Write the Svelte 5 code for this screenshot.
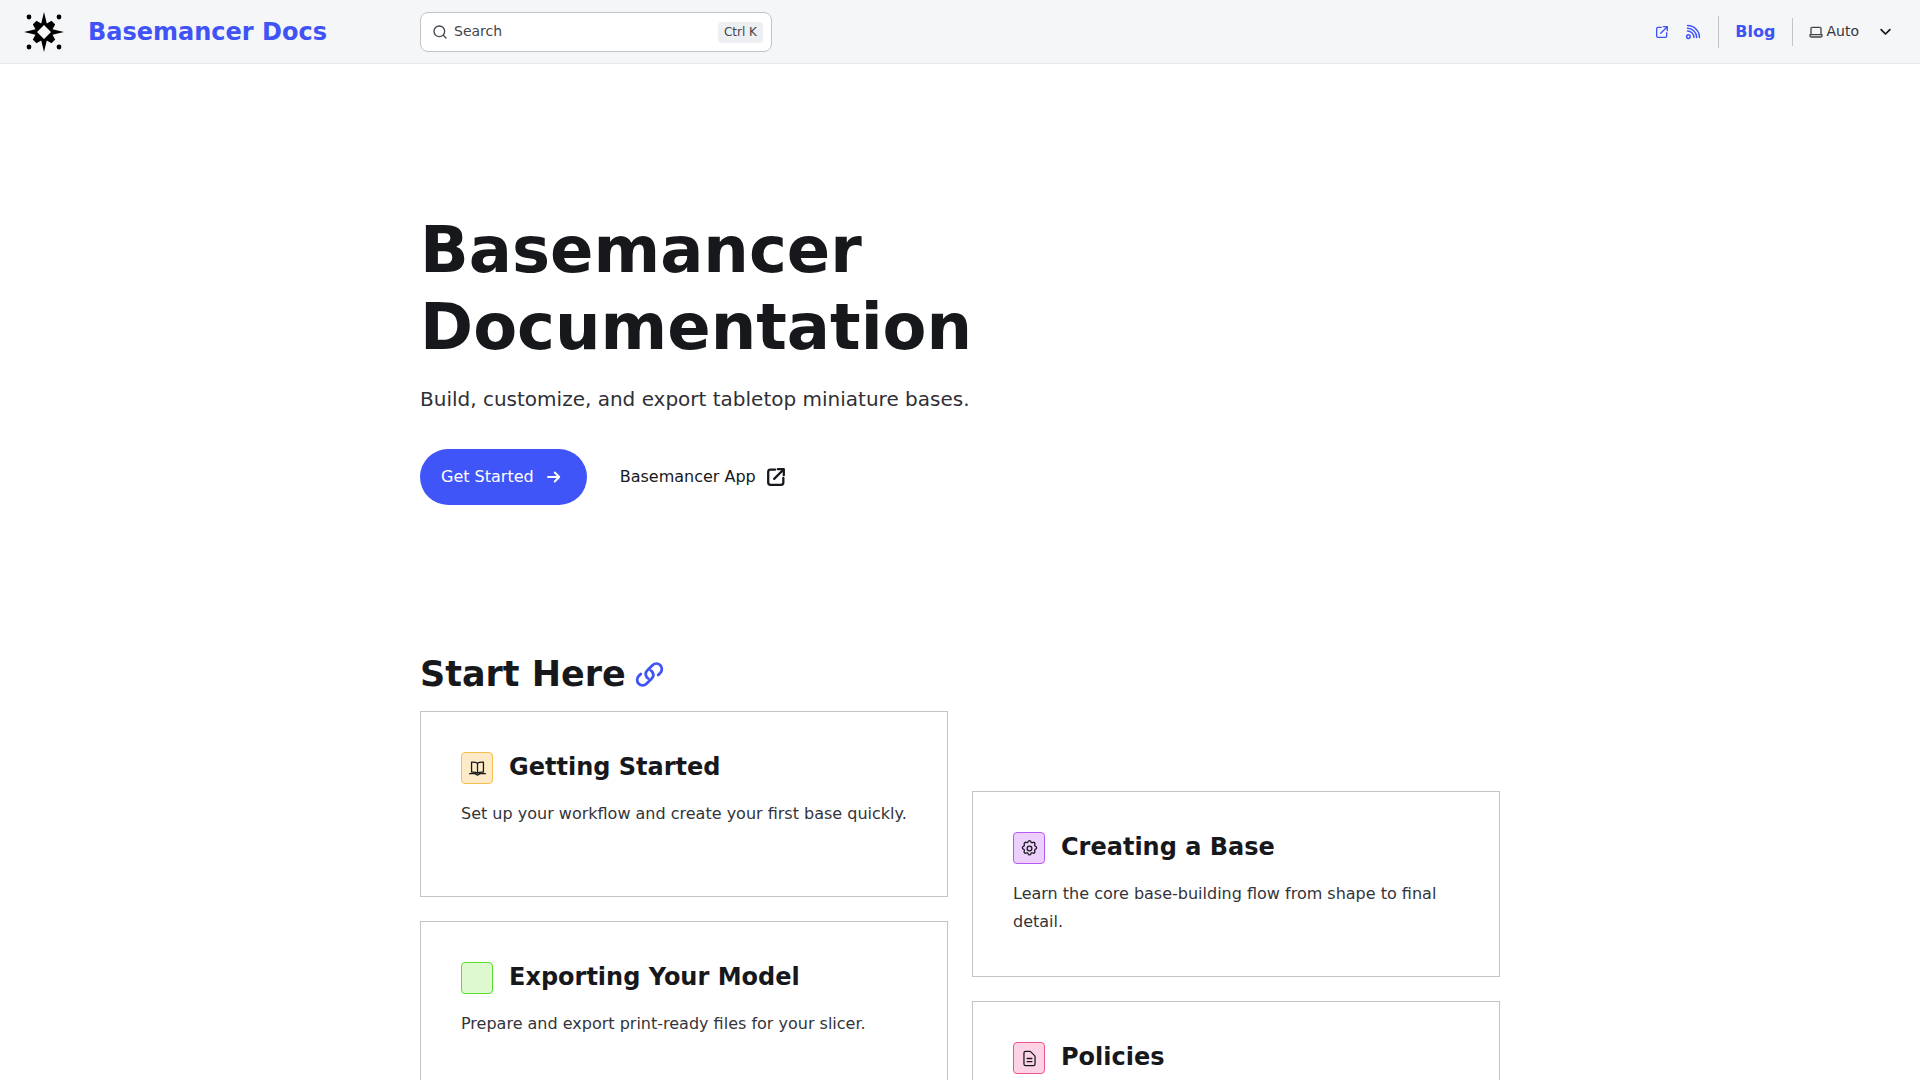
<script>
  const left = [
    { title: 'Getting Started', desc: 'Set up your workflow and create your first base quickly.', tone: 'amber', icon: 'book' },
    { title: 'Exporting Your Model', desc: 'Prepare and export print-ready files for your slicer.', tone: 'green', icon: '' }
  ];
  const right = [
    { title: 'Creating a Base', desc: 'Learn the core base-building flow from shape to final detail.', tone: 'purple', icon: 'gear' },
    { title: 'Policies', desc: '', tone: 'pink', icon: 'doc' }
  ];
</script>

{#snippet icon(name)}
  {#if name === 'book'}
    <svg viewBox="0 0 24 24" class="ci"><path d="M12 5.500C10.500 4.300 8 3.800 4.500 4v12.500c3.500-.2 6 .3 7.500 1.500 1.500-1.200 4-1.700 7.500-1.500V4C16 3.800 13.500 4.300 12 5.500zM12 5.500V18M2 18.500h7l3 2 3-2h7" /></svg>
  {:else if name === 'gear'}
    <svg viewBox="0 0 24 24" class="ci"><path d="M10.300 3.300c.4-1.800 3-1.800 3.400 0a1.700 1.700 0 0 0 2.600 1.100c1.500-.9 3.300.8 2.400 2.400a1.700 1.700 0 0 0 1 2.500c1.800.5 1.800 3 0 3.400a1.700 1.700 0 0 0-1 2.600c.9 1.500-.9 3.300-2.400 2.400a1.700 1.700 0 0 0-2.600 1c-.4 1.800-3 1.800-3.400 0a1.700 1.700 0 0 0-2.600-1c-1.500.9-3.300-.9-2.400-2.400a1.700 1.700 0 0 0-1-2.600c-1.800-.4-1.800-2.900 0-3.400a1.700 1.700 0 0 0 1-2.500C4.800 5.200 6.600 3.500 8.100 4.400a1.700 1.700 0 0 0 2.200-1.100z" /><circle cx="12" cy="12" r="3" /></svg>
  {:else if name === 'doc'}
    <svg viewBox="0 0 24 24" class="ci"><path d="M9 12h6M9 16h6M17 21H7a2 2 0 0 1-2-2V5a2 2 0 0 1 2-2h5.600a1 1 0 0 1 .7.3l5.400 5.400a1 1 0 0 1 .3.700V19a2 2 0 0 1-2 2z" /></svg>
  {/if}
{/snippet}

{#snippet card(c)}
  <a class="card" href="#top">
    <h3><span class="badge {c.tone}">{@render icon(c.icon)}</span><span class="ctitle">{c.title}</span></h3>
    {#if c.desc}<p>{c.desc}</p>{/if}
  </a>
{/snippet}

<header class="nav">
  <a class="brand" href="#top">
    <svg class="logo" viewBox="0 0 40 40">
      <path fill-rule="evenodd" d="M20 0 L22.800 11.500 L27.500 8.800 L31.200 12.500 L28.500 17.200 L40 20 L28.500 22.800 L31.200 27.500 L27.500 31.200 L22.800 28.500 L20 40 L17.200 28.500 L12.500 31.200 L8.800 27.500 L11.500 22.800 L0 20 L11.500 17.200 L8.800 12.500 L12.500 8.800 L17.200 11.500 Z M20 13 L13 20 L20 27 L27 20 Z" />
      <circle cx="5" cy="5" r="2.400" /><circle cx="35" cy="5" r="2.400" /><circle cx="5" cy="35" r="2.400" /><circle cx="35" cy="35" r="2.400" />
    </svg>
    <span>Basemancer Docs</span>
  </a>
  <div class="search">
    <svg viewBox="0 0 24 24" class="sicon"><circle cx="11" cy="11" r="8" /><path d="m21 21-4.300-4.300" /></svg>
    <span class="ph">Search</span>
    <kbd>Ctrl K</kbd>
  </div>
  <nav class="right">
    <svg viewBox="0 0 24 24" class="ni ext"><path d="M11 5H6a2 2 0 0 0-2 2v11a2 2 0 0 0 2 2h11a2 2 0 0 0 2-2v-5M10 14 20 4M14 4h6v6" /></svg>
    <svg viewBox="0 0 24 24" class="ni rss"><path d="M6 5c7.200 0 13 5.800 13 13M6 11a7 7 0 0 1 7 7" /><path d="M6 8c5.500 0 10 4.500 10 10" /><circle cx="7" cy="17" r="2" /></svg>
    <span class="sep tall"></span>
    <a class="blog" href="#top">Blog</a>
    <span class="sep short"></span>
    <svg viewBox="0 0 24 24" class="laptop"><path d="M6 5h12a1.500 1.500 0 0 1 1.500 1.500V16h-15V6.500A1.500 1.500 0 0 1 6 5zM3 16h18v1.500a2 2 0 0 1-2 2H5a2 2 0 0 1-2-2z" /></svg>
    <span class="auto">Auto</span>
    <svg viewBox="0 0 24 24" class="chev"><path d="m5 9 7 7 7-7" /></svg>
  </nav>
</header>

<main class="page">
  <h1>Basemancer<br />Documentation</h1>
  <p class="sub">Build, customize, and export tabletop miniature bases.</p>
  <div class="actions">
    <a class="primary" href="#top"><span class="lbl">Get Started</span>
      <svg viewBox="0 0 24 24" class="arrow"><path d="M4 12h15M13 6l6 6-6 6" /></svg>
    </a>
    <a class="secondary" href="#top"><span class="lbl">Basemancer App</span>
      <svg viewBox="0 0 24 24" class="extbig"><path d="M11 4H6a2.500 2.500 0 0 0-2.500 2.500V18A2.500 2.500 0 0 0 6 20.500h11.500A2.500 2.500 0 0 0 20 18v-5M10 14 20.500 3.500M14 3.500h6.500V10" /></svg>
    </a>
  </div>
  <h2>Start Here
    <svg viewBox="0 0 24 24" class="link"><path d="M13.200 8.800a4.500 4.500 0 0 1 1.200 1.200 4.500 4.500 0 0 1-.9 5.700l-4 4a4.500 4.500 0 0 1-6.400-6.400l1.700-1.700M10.800 15.200a4.500 4.500 0 0 1-1.200-1.200 4.500 4.500 0 0 1 .9-5.700l4-4a4.500 4.500 0 0 1 6.400 6.400l-1.700 1.700" /></svg>
  </h2>
  <div class="grid">
    <div class="col">
      {#each left as c}{@render card(c)}{/each}
    </div>
    <div class="col offset">
      {#each right as c}{@render card(c)}{/each}
    </div>
  </div>
</main>

<style>
  :global(html), :global(body) { overflow: hidden; height: 100%; }
  :global(body) { background: #fff; color: #17181c; font-family: "DejaVu Sans", sans-serif; }
  svg { display: block; flex: none; fill: none; stroke: currentColor; stroke-linecap: round; stroke-linejoin: round; }
  a { text-decoration: none; color: inherit; }

  .nav { height: 63px; display: flex; align-items: center; background: #f5f6f8; border-bottom: 1px solid #e8e9ec; padding: 0 24px; }
  .brand { width: 396px; display: flex; align-items: center; gap: 24px; color: #4053f5; font-weight: 700; font-size: 24px; flex: none; }
  .logo { width: 40px; height: 40px; fill: #000; stroke: none; }

  .search { width: 352px; height: 40px; margin-top: 1px; box-sizing: border-box; background: #fff; border: 1px solid #c3c4c8; border-radius: 8px; display: flex; align-items: center; padding: 0 8px 0 11px; gap: 6px; color: #44454b; font-size: 14px; flex: none; }
  .sicon { width: 16px; height: 16px; stroke-width: 2; }
  .ph { flex: 1; margin-top: -2px; }
  kbd { font-family: inherit; font-size: 12px; background: #eeeff2; border-radius: 4px; padding: 3px 6px; line-height: 15px; color: #44454b; }

  .right { margin-left: auto; display: flex; align-items: center; color: #4053f5; }
  .ni { stroke-width: 2; }
  .ext { width: 16px; height: 16px; }
  .rss { width: 22px; height: 22px; margin-left: 12px; stroke-width: 1.600; }
  .sep { width: 1px; background: #c3c4c8; }
  .tall { height: 32px; margin: 0 16px 0 14px; }
  .short { height: 28px; margin: 0 15px 0 17px; }
  .blog { font-weight: 700; font-size: 16px; }
  .laptop { width: 16px; height: 16px; color: #44454b; stroke-width: 2; }
  .auto { color: #34353a; font-size: 14px; margin: -2px 0 0 2px; }
  .chev { width: 15px; height: 15px; color: #17181c; stroke-width: 2.800; margin: 0 3px 0 19px; }

  .page { width: 1080px; margin: 0 auto; padding-top: 148px; }
  h1 { margin: 0; font-size: 64px; line-height: 77px; font-weight: 700; color: #17181c; }
  .sub { margin: 19px 0 0; font-size: 20px; line-height: 28px; color: #2f3036; }
  .actions { display: flex; align-items: center; margin-top: 36px; gap: 33px; }
  .primary { display: flex; align-items: center; gap: 11px; height: 56px; padding: 0 24px 0 21px; border-radius: 28px; background: #4055f8; color: #fff; font-size: 16px; }
  .lbl { margin-top: -2px; }
  .arrow { width: 18px; height: 18px; stroke-width: 2.600; }
  .secondary { display: flex; align-items: center; gap: 9px; font-size: 16px; color: #17181c; }
  .extbig { width: 22px; height: 22px; stroke-width: 2.500; }

  h2 { margin: 147px 0 0; font-size: 35px; line-height: 44px; font-weight: 700; display: flex; align-items: center; gap: 9px; }
  .link { width: 29px; height: 29px; color: #4053f5; stroke-width: 2.300; }

  .grid { display: flex; gap: 24px; margin-top: 15px; }
  .col { flex: 1; display: flex; flex-direction: column; gap: 24px; min-width: 0; }
  .offset { margin-top: 80px; }
  .card { display: block; height: 186px; box-sizing: border-box; border: 1px solid #c3c4c8; padding: 40px; }
  h3 { margin: 0; display: flex; align-items: center; gap: 16px; font-size: 24px; line-height: 32px; font-weight: 700; color: #17181c; }
  .ctitle { margin-top: -2px; }
  .card p { margin: 16px 0 0; font-size: 16px; line-height: 28px; color: #33343a; }
  .badge { width: 32px; height: 32px; box-sizing: border-box; border-radius: 4px; border: 1px solid; display: flex; align-items: center; justify-content: center; }
  .ci { width: 19px; height: 19px; stroke-width: 1.600; color: #17181c; }
  .amber { background: #fdebc8; border-color: #f7c04e; }
  .purple { background: #eccffd; border-color: #b45cf0; }
  .pink { background: #fcd3e4; border-color: #f0558f; }
  .green { background: #def9d0; border-color: #5adf2c; }
</style>
